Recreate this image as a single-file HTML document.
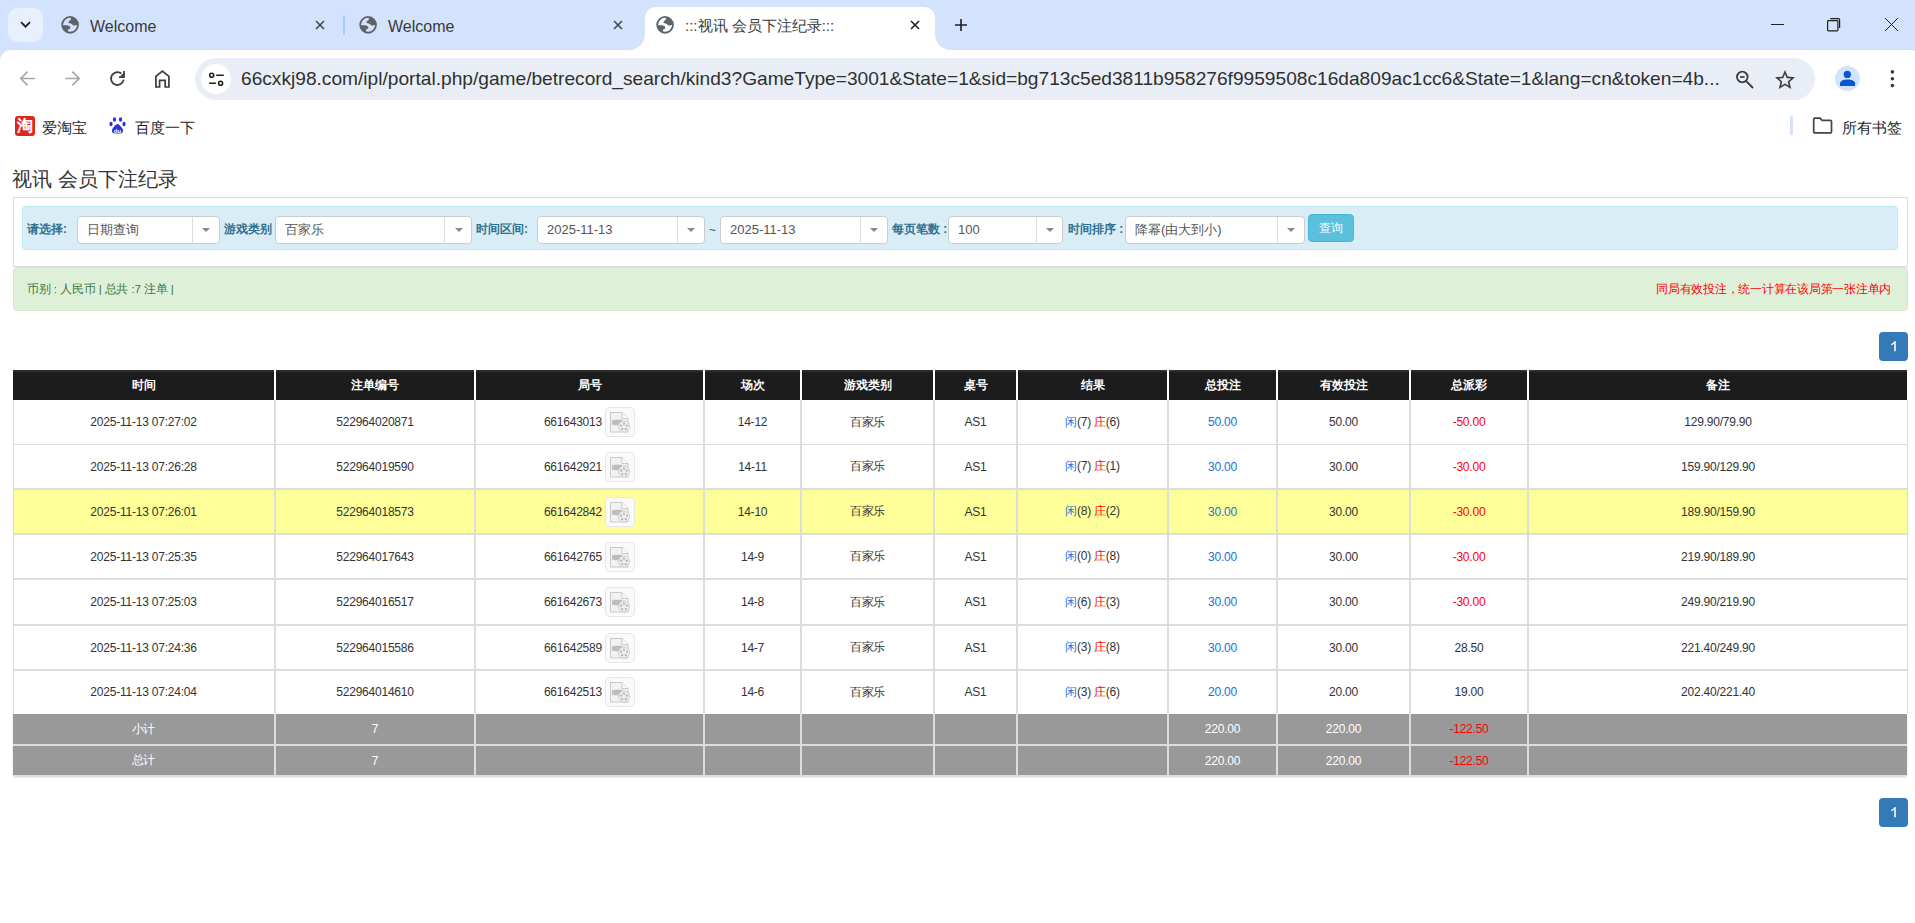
<!DOCTYPE html>
<html><head><meta charset="utf-8">
<style>
*{box-sizing:border-box;margin:0;padding:0}
html,body{width:1915px;height:923px;overflow:hidden;background:#fff;font-family:"Liberation Sans",sans-serif;position:relative;font-weight:300}
.abs{position:absolute}
/* tab strip */
#strip{position:absolute;left:0;top:0;width:1915px;height:64px;background:#d3e3fd}
#tabdd{position:absolute;left:8px;top:8px;width:35px;height:34px;border-radius:10px;background:#e9f0fd}
.tabtitle{position:absolute;top:16.5px;font-size:16px;color:#3a3a3a;line-height:20px;white-space:nowrap}
#acttab{position:absolute;left:645px;top:7px;width:290px;height:43px;background:#fff;border-radius:11px 11px 0 0}
.flare{position:absolute;top:34px;width:16px;height:16px;background:#fff}
.flare:after{content:"";position:absolute;left:0;top:0;width:16px;height:16px;background:#d3e3fd}
#flL{left:629px}#flL:after{border-bottom-right-radius:16px}
#flR{left:935px}#flR:after{border-bottom-left-radius:16px}
.sep{position:absolute;top:15px;width:2px;height:20px;background:#a8c7fa;border-radius:1px}
/* toolbar */
#toolbar{position:absolute;left:0;top:50px;width:1922px;height:60px;background:#fff;border-radius:11px 11px 0 0}
#omni{position:absolute;left:195px;top:58px;width:1620px;height:42px;border-radius:21px;background:#e9eef6}
#tune{position:absolute;left:201px;top:64px;width:30px;height:30px;border-radius:15px;background:#fff}
#url{position:absolute;left:241px;top:68px;font-size:19.15px;line-height:22px;color:#303030;white-space:nowrap;letter-spacing:0px}
#profile{position:absolute;left:1835px;top:66px;width:25px;height:25px;border-radius:50%;background:#d3e3fd}
/* bookmarks */
.bm{position:absolute;top:118.5px;font-size:15px;line-height:18px;color:#1f1f1f;white-space:nowrap}
/* page */
#title{position:absolute;left:12px;top:166px;font-size:20px;line-height:26px;color:#333;font-weight:300;white-space:nowrap}
#well{position:absolute;left:13px;top:197px;width:1895px;height:70px;border:1px solid #ddd;background:#fff}
#panel{position:absolute;left:22px;top:206px;width:1876px;height:44px;border:1px solid #bce8f1;background:#d9edf7;border-radius:4px}
.lbl{position:absolute;top:221px;font-size:12px;line-height:16px;font-weight:bold;color:#31708f;white-space:nowrap}
.sel{position:absolute;top:216px;height:28px;border:1px solid #ccc;border-radius:4px;background:#fff}
.sel .v{position:absolute;left:9px;top:5px;font-size:13px;line-height:16px;color:#555;white-space:nowrap}
.sel .dv{position:absolute;top:0;bottom:0;width:1px;background:#ddd}
.sel .ar{position:absolute;top:11px;width:0;height:0;border-left:4px solid transparent;border-right:4px solid transparent;border-top:4px solid #888}
#btn{position:absolute;left:1308px;top:214px;width:46px;height:28px;border-radius:4px;background:#5bc0de;border:1px solid #46b8da;color:#fff;font-size:12px;line-height:26px;text-align:center}
#alert{position:absolute;left:13px;top:267px;width:1895px;height:44px;background:#dff0d8;border:1px solid #d6e9c6;border-radius:4px}
#alert .l{position:absolute;left:13px;top:13px;font-size:11.7px;letter-spacing:-0.15px;line-height:16px;color:#3c763d;white-space:nowrap}
#alert .r{position:absolute;right:16px;top:13px;font-size:11.6px;letter-spacing:-0.25px;line-height:16px;color:#f00;white-space:nowrap}
.pg{position:absolute;left:1879px;width:29px;height:29px;border-radius:4px;background:#337ab7;color:#fff;font-weight:normal;-webkit-text-stroke:0.5px #fff;font-size:12.5px;line-height:29px;text-align:center}
/* table */
.th{position:absolute;top:370px;height:30px;background:linear-gradient(#333 0,#1c1c1c 3px,#1c1c1c 100%);color:#fff;font-weight:bold;font-size:12px;line-height:30px;text-align:center}
.tr{position:absolute;left:13px;width:1895px;background:#fff}
.tr.yel{background:#ffff99}
.hl{position:absolute;left:13px;width:1895px;height:2px;background:#ddd;z-index:2}
.vl{position:absolute;top:400px;height:314px;width:2px;background:#ddd;z-index:2}
.td{position:absolute;font-size:12px;letter-spacing:-0.22px;color:#333;text-align:center;display:flex;align-items:center;justify-content:center;white-space:nowrap;z-index:3}
.tot{position:absolute;background:#999;color:#fff;font-weight:400;font-size:12px;letter-spacing:-0.22px;text-align:center;display:flex;align-items:center;justify-content:center;z-index:3}
.bl{color:#1e6fd9}
.rd{color:#f00}
.film{display:inline-block;width:30px;height:30px;margin-left:0px;border:1px solid #e6e6e6;border-radius:4px;background:#fafafa;padding:3px 0 0 3px;vertical-align:middle}
.film svg{display:block}
#tblL{position:absolute;left:13px;top:400px;width:1px;height:314px;background:#ddd;z-index:2}
#tblR{position:absolute;left:1907px;top:400px;width:1px;height:314px;background:#ddd;z-index:2}
</style></head><body>
<!-- TAB STRIP -->
<div id="strip"></div>
<div id="tabdd"></div>
<svg class="abs" style="left:20px;top:21px" width="11" height="8" viewBox="0 0 11 8"><path d="M1 1.2l4.5 4.5 4.5-4.5" fill="none" stroke="#1f1f1f" stroke-width="1.8"/></svg>
<!-- tab1 -->
<svg class="abs" style="left:61px;top:16px" width="18" height="18" viewBox="0 0 18 18"><circle cx="9.1" cy="8.85" r="7.9" fill="none" stroke="#5f6368" stroke-width="1.8"/><path d="M10 1.1C9.8 2.5 9.9 3.7 9.5 4.2C8.5 4.5 7.3 5.5 7.4 6.6C7.6 7.5 9.5 7.3 10.8 7.9C11.7 8.5 11.8 9.3 12.6 9.4C13.8 9.5 15.5 9.2 17 8.8A7.9 7.9 0 0 0 10 1.1Z" fill="#5f6368"/><path d="M1.2 9.3C3.5 9.2 6.5 9.2 7.8 9.8C9.2 10.5 9.6 11.8 9.2 12.4C8.7 13 7.4 12.9 7 13.8C6.6 14.7 7 15.8 7.6 16.7A7.9 7.9 0 0 1 1.2 9.3Z" fill="#5f6368"/></svg>
<div class="tabtitle" style="left:90px">Welcome</div>
<svg class="abs" style="left:315px;top:20px" width="10" height="10" viewBox="0 0 10 10"><path d="M1 1l8 8M9 1l-8 8" stroke="#474747" stroke-width="1.6"/></svg>
<div class="sep" style="left:343px"></div>
<!-- tab2 -->
<svg class="abs" style="left:359px;top:16px" width="18" height="18" viewBox="0 0 18 18"><circle cx="9.1" cy="8.85" r="7.9" fill="none" stroke="#5f6368" stroke-width="1.8"/><path d="M10 1.1C9.8 2.5 9.9 3.7 9.5 4.2C8.5 4.5 7.3 5.5 7.4 6.6C7.6 7.5 9.5 7.3 10.8 7.9C11.7 8.5 11.8 9.3 12.6 9.4C13.8 9.5 15.5 9.2 17 8.8A7.9 7.9 0 0 0 10 1.1Z" fill="#5f6368"/><path d="M1.2 9.3C3.5 9.2 6.5 9.2 7.8 9.8C9.2 10.5 9.6 11.8 9.2 12.4C8.7 13 7.4 12.9 7 13.8C6.6 14.7 7 15.8 7.6 16.7A7.9 7.9 0 0 1 1.2 9.3Z" fill="#5f6368"/></svg>
<div class="tabtitle" style="left:388px">Welcome</div>
<svg class="abs" style="left:613px;top:20px" width="10" height="10" viewBox="0 0 10 10"><path d="M1 1l8 8M9 1l-8 8" stroke="#474747" stroke-width="1.6"/></svg>
<!-- active tab -->
<div class="flare" id="flL"></div>
<div class="flare" id="flR"></div>
<div id="acttab"></div>
<svg class="abs" style="left:656px;top:16px" width="18" height="18" viewBox="0 0 18 18"><circle cx="9.1" cy="8.85" r="7.9" fill="none" stroke="#5f6368" stroke-width="1.8"/><path d="M10 1.1C9.8 2.5 9.9 3.7 9.5 4.2C8.5 4.5 7.3 5.5 7.4 6.6C7.6 7.5 9.5 7.3 10.8 7.9C11.7 8.5 11.8 9.3 12.6 9.4C13.8 9.5 15.5 9.2 17 8.8A7.9 7.9 0 0 0 10 1.1Z" fill="#5f6368"/><path d="M1.2 9.3C3.5 9.2 6.5 9.2 7.8 9.8C9.2 10.5 9.6 11.8 9.2 12.4C8.7 13 7.4 12.9 7 13.8C6.6 14.7 7 15.8 7.6 16.7A7.9 7.9 0 0 1 1.2 9.3Z" fill="#5f6368"/></svg>
<div class="tabtitle" style="left:685px;font-size:15px;top:16px">:::视讯 会员下注纪录:::</div>
<svg class="abs" style="left:910px;top:20px" width="10" height="10" viewBox="0 0 10 10"><path d="M1 1l8 8M9 1l-8 8" stroke="#1f1f1f" stroke-width="1.6"/></svg>
<svg class="abs" style="left:955px;top:19px" width="12" height="12" viewBox="0 0 12 12"><path d="M6 0v12M0 6h12" stroke="#1f1f1f" stroke-width="1.6"/></svg>
<!-- window controls -->
<div class="abs" style="left:1771px;top:24px;width:13px;height:1px;background:#1f1f1f"></div>
<svg class="abs" style="left:1826px;top:17px" width="16" height="16" viewBox="0 0 16 16"><rect x="1.6" y="3.6" width="10.3" height="10.3" rx="0.8" fill="none" stroke="#1f1f1f" stroke-width="1.2"/><path d="M4.2 1.6h8.2a1.2 1.2 0 0 1 1.2 1.2v8.2" fill="none" stroke="#1f1f1f" stroke-width="1.2"/></svg>
<svg class="abs" style="left:1884px;top:17px" width="15" height="15" viewBox="0 0 15 15"><path d="M1 1l13 13M14 1L1 14" stroke="#1f1f1f" stroke-width="1"/></svg>

<!-- TOOLBAR -->
<div id="toolbar"></div>
<svg class="abs" style="left:19px;top:69px" width="17" height="19" viewBox="0 0 17 19"><path d="M15.9 9.5H2.2M8.6 2.6L1.8 9.5l6.8 6.9" fill="none" stroke="#a8a8a8" stroke-width="1.7"/></svg>
<svg class="abs" style="left:64px;top:69px" width="17" height="19" viewBox="0 0 17 19"><path d="M1.2 9.5h13.6M8.3 2.6l6.8 6.9-6.8 6.9" fill="none" stroke="#a8a8a8" stroke-width="1.7"/></svg>
<svg class="abs" style="left:108px;top:69px" width="18" height="18" viewBox="0 0 18 18"><path d="M15.7 10.7A6.4 6.4 0 1 1 13.3 4.5" fill="none" stroke="#3c3c3c" stroke-width="1.75"/><path d="M16 2v6h-5" fill="none" stroke="#3c3c3c" stroke-width="1.75"/><path d="M16 3.5v4h-4z" fill="#3c3c3c"/></svg>
<svg class="abs" style="left:154px;top:69px" width="17" height="19" viewBox="0 0 17 19"><path d="M1.9 18V7.4L8.4 2l6.5 5.4V18h-3.7v-6.7H5.6V18z" fill="none" stroke="#3c3c3c" stroke-width="1.7" stroke-linejoin="miter"/></svg>
<div id="omni"></div>
<div id="tune"></div>
<svg class="abs" style="left:207px;top:71px" width="17" height="16" viewBox="0 0 17 16"><circle cx="4.7" cy="4.2" r="2" fill="none" stroke="#1f1f1f" stroke-width="1.6"/><path d="M9.2 4.2h7.5M2.1 12.2h6.8" stroke="#1f1f1f" stroke-width="1.6"/><circle cx="13.6" cy="12.2" r="2" fill="none" stroke="#1f1f1f" stroke-width="1.6"/></svg>
<div id="url">66cxkj98.com/ipl/portal.php/game/betrecord_search/kind3?GameType=3001&amp;State=1&amp;sid=bg713c5ed3811b958276f9959508c16da809ac1cc6&amp;State=1&amp;lang=cn&amp;token=4b...</div>
<svg class="abs" style="left:1734px;top:68px" width="21" height="21" viewBox="0 0 21 21"><circle cx="8.3" cy="9" r="5.3" fill="none" stroke="#3c3c3c" stroke-width="1.8"/><path d="M6 9h4.6" stroke="#3c3c3c" stroke-width="1.7"/><path d="M12.2 13.2L19 20" stroke="#3c3c3c" stroke-width="1.9"/></svg>
<svg class="abs" style="left:1773px;top:68px" width="24" height="24" viewBox="0 0 24 24"><path d="M22 9.24l-7.19-.62L12 2 9.19 8.63 2 9.24l5.46 4.73L5.82 21 12 17.27 18.18 21l-1.63-7.03L22 9.24zM12 15.4l-3.76 2.27 1-4.28-3.32-2.88 4.38-.38L12 6.1l1.71 4.04 4.38.38-3.32 2.88 1 4.28L12 15.4z" fill="#3c3c3c"/></svg>
<div id="profile"></div>
<svg class="abs" style="left:1839px;top:70px" width="17" height="17" viewBox="0 0 17 17"><circle cx="8.3" cy="4.4" r="3.65" fill="#0b57d0"/><path d="M1 15.9V13.6C1 11.1 4.5 9.6 8.5 9.6S16.1 11.1 16.1 13.6V15.9Z" fill="#0b57d0"/></svg>
<svg class="abs" style="left:1889px;top:69px" width="7" height="20" viewBox="0 0 7 20"><circle cx="3.4" cy="2.9" r="1.8" fill="#3c3c3c"/><circle cx="3.4" cy="9.8" r="1.8" fill="#3c3c3c"/><circle cx="3.4" cy="16.6" r="1.8" fill="#3c3c3c"/></svg>

<!-- BOOKMARKS -->
<div class="abs" style="left:15px;top:116px;width:20px;height:20px;background:#e1251b;border-radius:3px;color:#fff;font-size:16px;line-height:20px;text-align:center;font-weight:bold">淘</div>
<div class="bm" style="left:42px">爱淘宝</div>
<svg class="abs" style="left:109px;top:117px" width="18" height="18" viewBox="0 0 18 18"><ellipse cx="5.5" cy="2.5" rx="1.6" ry="2.2" fill="#2932e1"/><ellipse cx="11.5" cy="2.5" rx="1.6" ry="2.2" fill="#2932e1"/><ellipse cx="2" cy="7" rx="1.6" ry="2.2" fill="#2932e1"/><ellipse cx="15" cy="7" rx="1.6" ry="2.2" fill="#2932e1"/><path d="M8.5 7c-2 0-3 2.5-4.5 4-1.5 1.5-1.6 5.5 1.5 5.5h6c3.1 0 3-4 1.5-5.5C11.5 9.5 10.5 7 8.5 7z" fill="#2932e1"/><text x="8.5" y="15.5" font-size="6" fill="#fff" text-anchor="middle" font-family="Liberation Sans" font-weight="bold">du</text></svg>
<div class="bm" style="left:135px">百度一下</div>
<div class="abs" style="left:1790px;top:116px;width:2.5px;height:19px;background:#d3e3fd;border-radius:1px"></div>
<svg class="abs" style="left:1812px;top:117px" width="21" height="17" viewBox="0 0 21 17"><path d="M1.7 2.3a1.2 1.2 0 0 1 1.2-1.2h5.2l2 2.2h8.2a1.2 1.2 0 0 1 1.2 1.2v10.2a1.2 1.2 0 0 1-1.2 1.2H2.9a1.2 1.2 0 0 1-1.2-1.2z" fill="none" stroke="#444" stroke-width="1.7"/></svg>
<div class="bm" style="left:1842px">所有书签</div>

<!-- PAGE -->
<div id="title">视讯 会员下注纪录</div>
<div id="well"></div>
<div id="panel"></div>
<div class="lbl" style="left:27px">请选择:</div>
<div class="sel" style="left:77px;width:143px"><span class="v">日期查询</span><span class="dv" style="left:114px"></span><span class="ar" style="left:124px"></span></div>
<div class="lbl" style="left:224px">游戏类别</div>
<div class="sel" style="left:275px;width:197px"><span class="v">百家乐</span><span class="dv" style="left:168px"></span><span class="ar" style="left:179px"></span></div>
<div class="lbl" style="left:476px">时间区间:</div>
<div class="sel" style="left:537px;width:168px"><span class="v">2025-11-13</span><span class="dv" style="left:139px"></span><span class="ar" style="left:149px"></span></div>
<div class="abs" style="left:709px;top:222px;font-size:12px;line-height:16px;color:#555">~</div>
<div class="sel" style="left:720px;width:168px"><span class="v">2025-11-13</span><span class="dv" style="left:139px"></span><span class="ar" style="left:149px"></span></div>
<div class="lbl" style="left:892px">每页笔数 :</div>
<div class="sel" style="left:948px;width:115px"><span class="v">100</span><span class="dv" style="left:87px"></span><span class="ar" style="left:97px"></span></div>
<div class="lbl" style="left:1068px">时间排序 :</div>
<div class="sel" style="left:1125px;width:180px"><span class="v">降幂(由大到小)</span><span class="dv" style="left:151px"></span><span class="ar" style="left:161px"></span></div>
<div id="btn">查询</div>
<div id="alert"><span class="l">币别 : 人民币 | 总共 :7 注单 |</span><span class="r">同局有效投注，统一计算在该局第一张注单内</span></div>
<div class="pg" style="top:332px"><svg width="29" height="29" viewBox="0 0 29 29" style="display:block"><path d="M16 9.3v9.9" stroke="#fff" stroke-width="1.6"/><path d="M16 9.6c-.8 1.5-2.2 2.5-3.8 3" fill="none" stroke="#fff" stroke-width="1.4"/></svg></div>
<div class="pg" style="top:798px"><svg width="29" height="29" viewBox="0 0 29 29" style="display:block"><path d="M16 9.3v9.9" stroke="#fff" stroke-width="1.6"/><path d="M16 9.6c-.8 1.5-2.2 2.5-3.8 3" fill="none" stroke="#fff" stroke-width="1.4"/></svg></div>

<!-- TABLE -->
<div id="tblL"></div><div id="tblR"></div><div class="abs" style="left:13px;top:714px;width:1894px;height:62px;background:#ddd;box-shadow:0 1px 2px rgba(0,0,0,.18);border-radius:0 0 2px 2px"></div>
<div class="th" style="left:13px;width:261px">时间</div>
<div class="th" style="left:276px;width:198px">注单编号</div>
<div class="th" style="left:476px;width:227px">局号</div>
<div class="th" style="left:705px;width:95px">场次</div>
<div class="th" style="left:802px;width:131px">游戏类别</div>
<div class="th" style="left:935px;width:81px">桌号</div>
<div class="th" style="left:1018px;width:149px">结果</div>
<div class="th" style="left:1169px;width:107px">总投注</div>
<div class="th" style="left:1278px;width:131px">有效投注</div>
<div class="th" style="left:1411px;width:116px">总派彩</div>
<div class="th" style="left:1529px;width:378px">备注</div>
<div class="vl" style="left:274px"></div>
<div class="vl" style="left:474px"></div>
<div class="vl" style="left:703px"></div>
<div class="vl" style="left:800px"></div>
<div class="vl" style="left:933px"></div>
<div class="vl" style="left:1016px"></div>
<div class="vl" style="left:1167px"></div>
<div class="vl" style="left:1276px"></div>
<div class="vl" style="left:1409px"></div>
<div class="vl" style="left:1527px"></div>
<div class="tr" style="top:400px;height:44px"></div>
<div class="td" style="left:13px;width:261px;top:400px;height:44px"><span>2025-11-13 07:27:02</span></div>
<div class="td" style="left:276px;width:198px;top:400px;height:44px"><span>522964020871</span></div>
<div class="td" style="left:476px;width:227px;top:400px;height:44px"><span><span style="position:relative;top:1px">661643013</span> <span class="film"><svg width="22" height="22" viewBox="0 0 22 22"><path d="M1.5 1.5h11.5l6 6v13.5h-17.5z" fill="#f2f2f2" stroke="#c9c9c9" stroke-width="1"/><path d="M13 1.5v6h6" fill="#fbfbfb" stroke="#c9c9c9" stroke-width="1"/><path d="M3 8.5l2 1.5v-1.2h8v5.5H5v-1.3l-2 1.5z" fill="#bcbcbc"/><circle cx="15" cy="15.5" r="5.6" fill="#eeeeee" stroke="#cfcfcf" stroke-width="1"/><circle cx="15" cy="12.6" r="1.2" fill="#b8b8b8"/><circle cx="17.9" cy="14.6" r="1.2" fill="#b8b8b8"/><circle cx="16.8" cy="18.1" r="1.2" fill="#b8b8b8"/><circle cx="13.2" cy="18.1" r="1.2" fill="#b8b8b8"/><circle cx="12.1" cy="14.6" r="1.2" fill="#b8b8b8"/></svg></span></span></div>
<div class="td" style="left:705px;width:95px;top:400px;height:44px"><span>14-12</span></div>
<div class="td" style="left:802px;width:131px;top:400px;height:44px"><span>百家乐</span></div>
<div class="td" style="left:935px;width:81px;top:400px;height:44px"><span>AS1</span></div>
<div class="td" style="left:1018px;width:149px;top:400px;height:44px"><span><span class="bl">闲</span>(7) <span class="rd">庄</span>(6)</span></div>
<div class="td" style="left:1169px;width:107px;top:400px;height:44px"><span><span class="bl">50.00</span></span></div>
<div class="td" style="left:1278px;width:131px;top:400px;height:44px"><span>50.00</span></div>
<div class="td" style="left:1411px;width:116px;top:400px;height:44px"><span><span class="rd">-50.00</span></span></div>
<div class="td" style="left:1529px;width:378px;top:400px;height:44px"><span>129.90/79.90</span></div>
<div class="tr" style="top:444px;height:45px"></div>
<div class="hl" style="top:444px;height:1px"></div>
<div class="td" style="left:13px;width:261px;top:444px;height:45px"><span>2025-11-13 07:26:28</span></div>
<div class="td" style="left:276px;width:198px;top:444px;height:45px"><span>522964019590</span></div>
<div class="td" style="left:476px;width:227px;top:444px;height:45px"><span><span style="position:relative;top:1px">661642921</span> <span class="film"><svg width="22" height="22" viewBox="0 0 22 22"><path d="M1.5 1.5h11.5l6 6v13.5h-17.5z" fill="#f2f2f2" stroke="#c9c9c9" stroke-width="1"/><path d="M13 1.5v6h6" fill="#fbfbfb" stroke="#c9c9c9" stroke-width="1"/><path d="M3 8.5l2 1.5v-1.2h8v5.5H5v-1.3l-2 1.5z" fill="#bcbcbc"/><circle cx="15" cy="15.5" r="5.6" fill="#eeeeee" stroke="#cfcfcf" stroke-width="1"/><circle cx="15" cy="12.6" r="1.2" fill="#b8b8b8"/><circle cx="17.9" cy="14.6" r="1.2" fill="#b8b8b8"/><circle cx="16.8" cy="18.1" r="1.2" fill="#b8b8b8"/><circle cx="13.2" cy="18.1" r="1.2" fill="#b8b8b8"/><circle cx="12.1" cy="14.6" r="1.2" fill="#b8b8b8"/></svg></span></span></div>
<div class="td" style="left:705px;width:95px;top:444px;height:45px"><span>14-11</span></div>
<div class="td" style="left:802px;width:131px;top:444px;height:45px"><span>百家乐</span></div>
<div class="td" style="left:935px;width:81px;top:444px;height:45px"><span>AS1</span></div>
<div class="td" style="left:1018px;width:149px;top:444px;height:45px"><span><span class="bl">闲</span>(7) <span class="rd">庄</span>(1)</span></div>
<div class="td" style="left:1169px;width:107px;top:444px;height:45px"><span><span class="bl">30.00</span></span></div>
<div class="td" style="left:1278px;width:131px;top:444px;height:45px"><span>30.00</span></div>
<div class="td" style="left:1411px;width:116px;top:444px;height:45px"><span><span class="rd">-30.00</span></span></div>
<div class="td" style="left:1529px;width:378px;top:444px;height:45px"><span>159.90/129.90</span></div>
<div class="tr yel" style="top:489px;height:45px"></div>
<div class="hl" style="top:488px;height:2px"></div>
<div class="td" style="left:13px;width:261px;top:489px;height:45px"><span>2025-11-13 07:26:01</span></div>
<div class="td" style="left:276px;width:198px;top:489px;height:45px"><span>522964018573</span></div>
<div class="td" style="left:476px;width:227px;top:489px;height:45px"><span><span style="position:relative;top:1px">661642842</span> <span class="film"><svg width="22" height="22" viewBox="0 0 22 22"><path d="M1.5 1.5h11.5l6 6v13.5h-17.5z" fill="#f2f2f2" stroke="#c9c9c9" stroke-width="1"/><path d="M13 1.5v6h6" fill="#fbfbfb" stroke="#c9c9c9" stroke-width="1"/><path d="M3 8.5l2 1.5v-1.2h8v5.5H5v-1.3l-2 1.5z" fill="#bcbcbc"/><circle cx="15" cy="15.5" r="5.6" fill="#eeeeee" stroke="#cfcfcf" stroke-width="1"/><circle cx="15" cy="12.6" r="1.2" fill="#b8b8b8"/><circle cx="17.9" cy="14.6" r="1.2" fill="#b8b8b8"/><circle cx="16.8" cy="18.1" r="1.2" fill="#b8b8b8"/><circle cx="13.2" cy="18.1" r="1.2" fill="#b8b8b8"/><circle cx="12.1" cy="14.6" r="1.2" fill="#b8b8b8"/></svg></span></span></div>
<div class="td" style="left:705px;width:95px;top:489px;height:45px"><span>14-10</span></div>
<div class="td" style="left:802px;width:131px;top:489px;height:45px"><span>百家乐</span></div>
<div class="td" style="left:935px;width:81px;top:489px;height:45px"><span>AS1</span></div>
<div class="td" style="left:1018px;width:149px;top:489px;height:45px"><span><span class="bl">闲</span>(8) <span class="rd">庄</span>(2)</span></div>
<div class="td" style="left:1169px;width:107px;top:489px;height:45px"><span><span class="bl">30.00</span></span></div>
<div class="td" style="left:1278px;width:131px;top:489px;height:45px"><span>30.00</span></div>
<div class="td" style="left:1411px;width:116px;top:489px;height:45px"><span><span class="rd">-30.00</span></span></div>
<div class="td" style="left:1529px;width:378px;top:489px;height:45px"><span>189.90/159.90</span></div>
<div class="tr" style="top:534px;height:45px"></div>
<div class="hl" style="top:533px;height:2px"></div>
<div class="td" style="left:13px;width:261px;top:534px;height:45px"><span>2025-11-13 07:25:35</span></div>
<div class="td" style="left:276px;width:198px;top:534px;height:45px"><span>522964017643</span></div>
<div class="td" style="left:476px;width:227px;top:534px;height:45px"><span><span style="position:relative;top:1px">661642765</span> <span class="film"><svg width="22" height="22" viewBox="0 0 22 22"><path d="M1.5 1.5h11.5l6 6v13.5h-17.5z" fill="#f2f2f2" stroke="#c9c9c9" stroke-width="1"/><path d="M13 1.5v6h6" fill="#fbfbfb" stroke="#c9c9c9" stroke-width="1"/><path d="M3 8.5l2 1.5v-1.2h8v5.5H5v-1.3l-2 1.5z" fill="#bcbcbc"/><circle cx="15" cy="15.5" r="5.6" fill="#eeeeee" stroke="#cfcfcf" stroke-width="1"/><circle cx="15" cy="12.6" r="1.2" fill="#b8b8b8"/><circle cx="17.9" cy="14.6" r="1.2" fill="#b8b8b8"/><circle cx="16.8" cy="18.1" r="1.2" fill="#b8b8b8"/><circle cx="13.2" cy="18.1" r="1.2" fill="#b8b8b8"/><circle cx="12.1" cy="14.6" r="1.2" fill="#b8b8b8"/></svg></span></span></div>
<div class="td" style="left:705px;width:95px;top:534px;height:45px"><span>14-9</span></div>
<div class="td" style="left:802px;width:131px;top:534px;height:45px"><span>百家乐</span></div>
<div class="td" style="left:935px;width:81px;top:534px;height:45px"><span>AS1</span></div>
<div class="td" style="left:1018px;width:149px;top:534px;height:45px"><span><span class="bl">闲</span>(0) <span class="rd">庄</span>(8)</span></div>
<div class="td" style="left:1169px;width:107px;top:534px;height:45px"><span><span class="bl">30.00</span></span></div>
<div class="td" style="left:1278px;width:131px;top:534px;height:45px"><span>30.00</span></div>
<div class="td" style="left:1411px;width:116px;top:534px;height:45px"><span><span class="rd">-30.00</span></span></div>
<div class="td" style="left:1529px;width:378px;top:534px;height:45px"><span>219.90/189.90</span></div>
<div class="tr" style="top:579px;height:46px"></div>
<div class="hl" style="top:578px;height:2px"></div>
<div class="td" style="left:13px;width:261px;top:579px;height:46px"><span>2025-11-13 07:25:03</span></div>
<div class="td" style="left:276px;width:198px;top:579px;height:46px"><span>522964016517</span></div>
<div class="td" style="left:476px;width:227px;top:579px;height:46px"><span><span style="position:relative;top:1px">661642673</span> <span class="film"><svg width="22" height="22" viewBox="0 0 22 22"><path d="M1.5 1.5h11.5l6 6v13.5h-17.5z" fill="#f2f2f2" stroke="#c9c9c9" stroke-width="1"/><path d="M13 1.5v6h6" fill="#fbfbfb" stroke="#c9c9c9" stroke-width="1"/><path d="M3 8.5l2 1.5v-1.2h8v5.5H5v-1.3l-2 1.5z" fill="#bcbcbc"/><circle cx="15" cy="15.5" r="5.6" fill="#eeeeee" stroke="#cfcfcf" stroke-width="1"/><circle cx="15" cy="12.6" r="1.2" fill="#b8b8b8"/><circle cx="17.9" cy="14.6" r="1.2" fill="#b8b8b8"/><circle cx="16.8" cy="18.1" r="1.2" fill="#b8b8b8"/><circle cx="13.2" cy="18.1" r="1.2" fill="#b8b8b8"/><circle cx="12.1" cy="14.6" r="1.2" fill="#b8b8b8"/></svg></span></span></div>
<div class="td" style="left:705px;width:95px;top:579px;height:46px"><span>14-8</span></div>
<div class="td" style="left:802px;width:131px;top:579px;height:46px"><span>百家乐</span></div>
<div class="td" style="left:935px;width:81px;top:579px;height:46px"><span>AS1</span></div>
<div class="td" style="left:1018px;width:149px;top:579px;height:46px"><span><span class="bl">闲</span>(6) <span class="rd">庄</span>(3)</span></div>
<div class="td" style="left:1169px;width:107px;top:579px;height:46px"><span><span class="bl">30.00</span></span></div>
<div class="td" style="left:1278px;width:131px;top:579px;height:46px"><span>30.00</span></div>
<div class="td" style="left:1411px;width:116px;top:579px;height:46px"><span><span class="rd">-30.00</span></span></div>
<div class="td" style="left:1529px;width:378px;top:579px;height:46px"><span>249.90/219.90</span></div>
<div class="tr" style="top:625px;height:45px"></div>
<div class="hl" style="top:624px;height:2px"></div>
<div class="td" style="left:13px;width:261px;top:625px;height:45px"><span>2025-11-13 07:24:36</span></div>
<div class="td" style="left:276px;width:198px;top:625px;height:45px"><span>522964015586</span></div>
<div class="td" style="left:476px;width:227px;top:625px;height:45px"><span><span style="position:relative;top:1px">661642589</span> <span class="film"><svg width="22" height="22" viewBox="0 0 22 22"><path d="M1.5 1.5h11.5l6 6v13.5h-17.5z" fill="#f2f2f2" stroke="#c9c9c9" stroke-width="1"/><path d="M13 1.5v6h6" fill="#fbfbfb" stroke="#c9c9c9" stroke-width="1"/><path d="M3 8.5l2 1.5v-1.2h8v5.5H5v-1.3l-2 1.5z" fill="#bcbcbc"/><circle cx="15" cy="15.5" r="5.6" fill="#eeeeee" stroke="#cfcfcf" stroke-width="1"/><circle cx="15" cy="12.6" r="1.2" fill="#b8b8b8"/><circle cx="17.9" cy="14.6" r="1.2" fill="#b8b8b8"/><circle cx="16.8" cy="18.1" r="1.2" fill="#b8b8b8"/><circle cx="13.2" cy="18.1" r="1.2" fill="#b8b8b8"/><circle cx="12.1" cy="14.6" r="1.2" fill="#b8b8b8"/></svg></span></span></div>
<div class="td" style="left:705px;width:95px;top:625px;height:45px"><span>14-7</span></div>
<div class="td" style="left:802px;width:131px;top:625px;height:45px"><span>百家乐</span></div>
<div class="td" style="left:935px;width:81px;top:625px;height:45px"><span>AS1</span></div>
<div class="td" style="left:1018px;width:149px;top:625px;height:45px"><span><span class="bl">闲</span>(3) <span class="rd">庄</span>(8)</span></div>
<div class="td" style="left:1169px;width:107px;top:625px;height:45px"><span><span class="bl">30.00</span></span></div>
<div class="td" style="left:1278px;width:131px;top:625px;height:45px"><span>30.00</span></div>
<div class="td" style="left:1411px;width:116px;top:625px;height:45px"><span>28.50</span></div>
<div class="td" style="left:1529px;width:378px;top:625px;height:45px"><span>221.40/249.90</span></div>
<div class="tr" style="top:670px;height:44px"></div>
<div class="hl" style="top:669px;height:2px"></div>
<div class="td" style="left:13px;width:261px;top:670px;height:44px"><span>2025-11-13 07:24:04</span></div>
<div class="td" style="left:276px;width:198px;top:670px;height:44px"><span>522964014610</span></div>
<div class="td" style="left:476px;width:227px;top:670px;height:44px"><span><span style="position:relative;top:1px">661642513</span> <span class="film"><svg width="22" height="22" viewBox="0 0 22 22"><path d="M1.5 1.5h11.5l6 6v13.5h-17.5z" fill="#f2f2f2" stroke="#c9c9c9" stroke-width="1"/><path d="M13 1.5v6h6" fill="#fbfbfb" stroke="#c9c9c9" stroke-width="1"/><path d="M3 8.5l2 1.5v-1.2h8v5.5H5v-1.3l-2 1.5z" fill="#bcbcbc"/><circle cx="15" cy="15.5" r="5.6" fill="#eeeeee" stroke="#cfcfcf" stroke-width="1"/><circle cx="15" cy="12.6" r="1.2" fill="#b8b8b8"/><circle cx="17.9" cy="14.6" r="1.2" fill="#b8b8b8"/><circle cx="16.8" cy="18.1" r="1.2" fill="#b8b8b8"/><circle cx="13.2" cy="18.1" r="1.2" fill="#b8b8b8"/><circle cx="12.1" cy="14.6" r="1.2" fill="#b8b8b8"/></svg></span></span></div>
<div class="td" style="left:705px;width:95px;top:670px;height:44px"><span>14-6</span></div>
<div class="td" style="left:802px;width:131px;top:670px;height:44px"><span>百家乐</span></div>
<div class="td" style="left:935px;width:81px;top:670px;height:44px"><span>AS1</span></div>
<div class="td" style="left:1018px;width:149px;top:670px;height:44px"><span><span class="bl">闲</span>(3) <span class="rd">庄</span>(6)</span></div>
<div class="td" style="left:1169px;width:107px;top:670px;height:44px"><span><span class="bl">20.00</span></span></div>
<div class="td" style="left:1278px;width:131px;top:670px;height:44px"><span>20.00</span></div>
<div class="td" style="left:1411px;width:116px;top:670px;height:44px"><span>19.00</span></div>
<div class="td" style="left:1529px;width:378px;top:670px;height:44px"><span>202.40/221.40</span></div>
<div class="tot" style="left:13px;width:261px;top:714px;height:30px">小计</div>
<div class="tot" style="left:276px;width:198px;top:714px;height:30px">7</div>
<div class="tot" style="left:476px;width:227px;top:714px;height:30px"></div>
<div class="tot" style="left:705px;width:95px;top:714px;height:30px"></div>
<div class="tot" style="left:802px;width:131px;top:714px;height:30px"></div>
<div class="tot" style="left:935px;width:81px;top:714px;height:30px"></div>
<div class="tot" style="left:1018px;width:149px;top:714px;height:30px"></div>
<div class="tot" style="left:1169px;width:107px;top:714px;height:30px">220.00</div>
<div class="tot" style="left:1278px;width:131px;top:714px;height:30px">220.00</div>
<div class="tot" style="left:1411px;width:116px;top:714px;height:30px"><span class="rd">-122.50</span></div>
<div class="tot" style="left:1529px;width:378px;top:714px;height:30px"></div>
<div class="tot" style="left:13px;width:261px;top:746px;height:29px">总计</div>
<div class="tot" style="left:276px;width:198px;top:746px;height:29px">7</div>
<div class="tot" style="left:476px;width:227px;top:746px;height:29px"></div>
<div class="tot" style="left:705px;width:95px;top:746px;height:29px"></div>
<div class="tot" style="left:802px;width:131px;top:746px;height:29px"></div>
<div class="tot" style="left:935px;width:81px;top:746px;height:29px"></div>
<div class="tot" style="left:1018px;width:149px;top:746px;height:29px"></div>
<div class="tot" style="left:1169px;width:107px;top:746px;height:29px">220.00</div>
<div class="tot" style="left:1278px;width:131px;top:746px;height:29px">220.00</div>
<div class="tot" style="left:1411px;width:116px;top:746px;height:29px"><span class="rd">-122.50</span></div>
<div class="tot" style="left:1529px;width:378px;top:746px;height:29px"></div>
</body></html>
